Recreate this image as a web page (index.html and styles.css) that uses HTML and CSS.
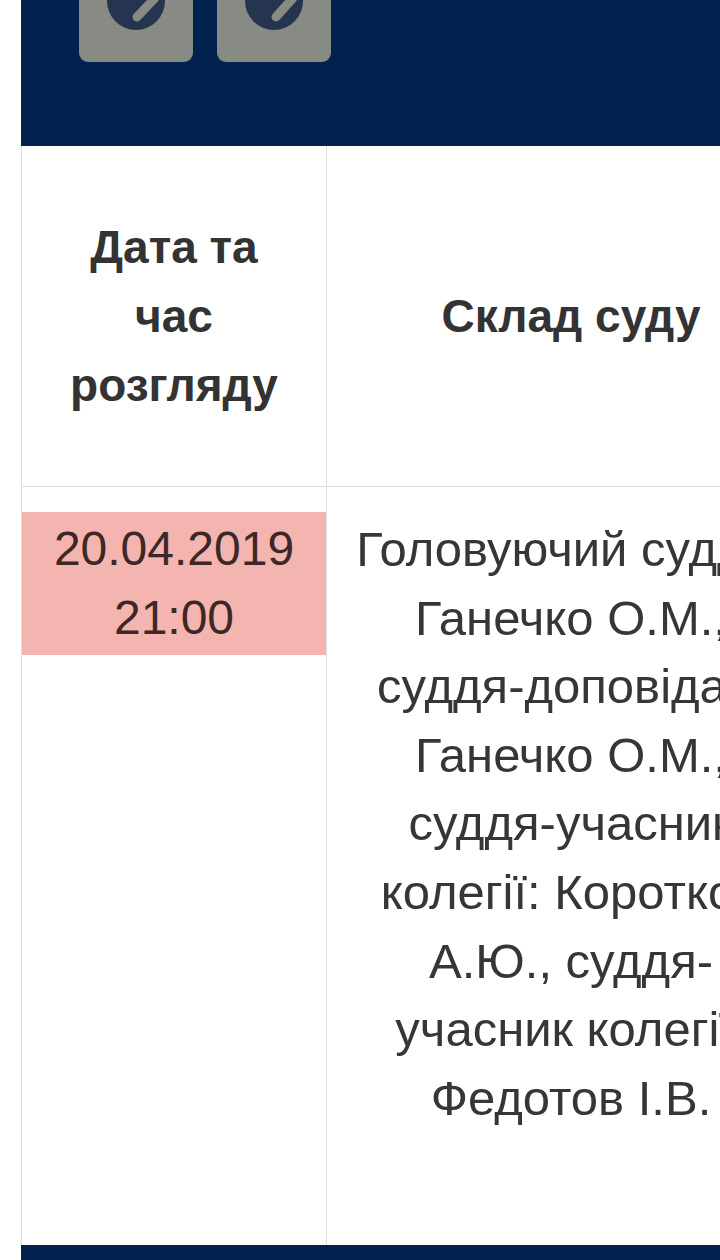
FILE: index.html
```html
<!DOCTYPE html>
<html lang="uk">
<head>
<meta charset="utf-8">
<title>Розклад засідань</title>
<link rel="stylesheet" href="styles.css">
</head>
<body>
<div class="page">
  <div class="topbar">
    <div class="nav-buttons">
      <button class="nav-btn" type="button" aria-label="Назад">
        <svg width="114" height="62" viewBox="0 0 114 62">
          <circle cx="57" cy="1" r="29" fill="#25344f"/>
          <path d="M40 -14 L76 -2 L58 17" fill="none" stroke="#878b83" stroke-width="9" stroke-linecap="round" stroke-linejoin="round"/>
        </svg>
      </button>
      <button class="nav-btn" type="button" aria-label="Вперед">
        <svg width="114" height="62" viewBox="0 0 114 62">
          <circle cx="57" cy="1" r="29" fill="#25344f"/>
          <path d="M40 -14 L76 -2 L59 17" fill="none" stroke="#878b83" stroke-width="9" stroke-linecap="round" stroke-linejoin="round"/>
        </svg>
      </button>
    </div>
  </div>
  <table class="schedule">
    <thead>
      <tr>
        <th class="col-date">Дата та<br>час<br>розгляду</th>
        <th class="col-court">Склад суду</th>
      </tr>
    </thead>
    <tbody>
      <tr>
        <td class="col-date cell-date">
          <div class="date-mark">20.04.2019<br>21:00</div>
        </td>
        <td class="col-court cell-court">
          <div class="court-text">
            <span class="line">Головуючий суддя:</span>
            <span class="line">Ганечко О.М.,</span>
            <span class="line">суддя-доповідач:</span>
            <span class="line">Ганечко О.М.,</span>
            <span class="line">суддя-учасник</span>
            <span class="line">колегії: Коротков</span>
            <span class="line">А.Ю., суддя-</span>
            <span class="line">учасник колегії:</span>
            <span class="line">Федотов І.В.</span>
          </div>
        </td>
      </tr>
    </tbody>
  </table>
  <div class="bottombar"></div>
</div>
</body>
</html>
```

FILE: styles.css
```css
html, body {
  margin: 0;
  padding: 0;
  background: #ffffff;
  overflow: hidden;
}

body {
  font-family: "Liberation Sans", Arial, sans-serif;
  color: #333333;
}

.page {
  width: 900px;
  padding-left: 21px;
}

.topbar {
  background: #01224f;
  height: 146px;
  padding-left: 58px;
  box-sizing: border-box;
}

.nav-buttons {
  display: flex;
  gap: 24px;
}

.nav-btn {
  width: 114px;
  height: 62px;
  padding: 0;
  border: none;
  border-radius: 0 0 9px 9px;
  background: #878b83;
  overflow: hidden;
  display: block;
}

.nav-btn svg {
  display: block;
}

.schedule {
  border-collapse: collapse;
  table-layout: fixed;
  width: 793px;
  border-left: 1px solid #dddddd;
}

.schedule th,
.schedule td {
  text-align: center;
  padding: 0;
  font-size: 48px;
  line-height: 68.6px;
}

.schedule th {
  font-weight: bold;
  font-size: 46px;
  line-height: 69px;
  height: 340px;
  vertical-align: middle;
  border-bottom: 1px solid #dddddd;
  color: #333333;
}

.col-date {
  width: 304px;
  border-right: 1px solid #dddddd;
}

.col-court {
  width: 488px;
}

.schedule td {
  vertical-align: top;
  padding-top: 25px;
}

.date-mark {
  background: #f4b5b0;
  color: #3d2727;
  padding: 3px 0;
}

.court-text {
  padding: 3px 0 113px;
  color: #363636;
  font-size: 49px;
}

.court-text .line {
  display: block;
  white-space: nowrap;
}

.bottombar {
  background: #01224f;
  height: 40px;
}
```
